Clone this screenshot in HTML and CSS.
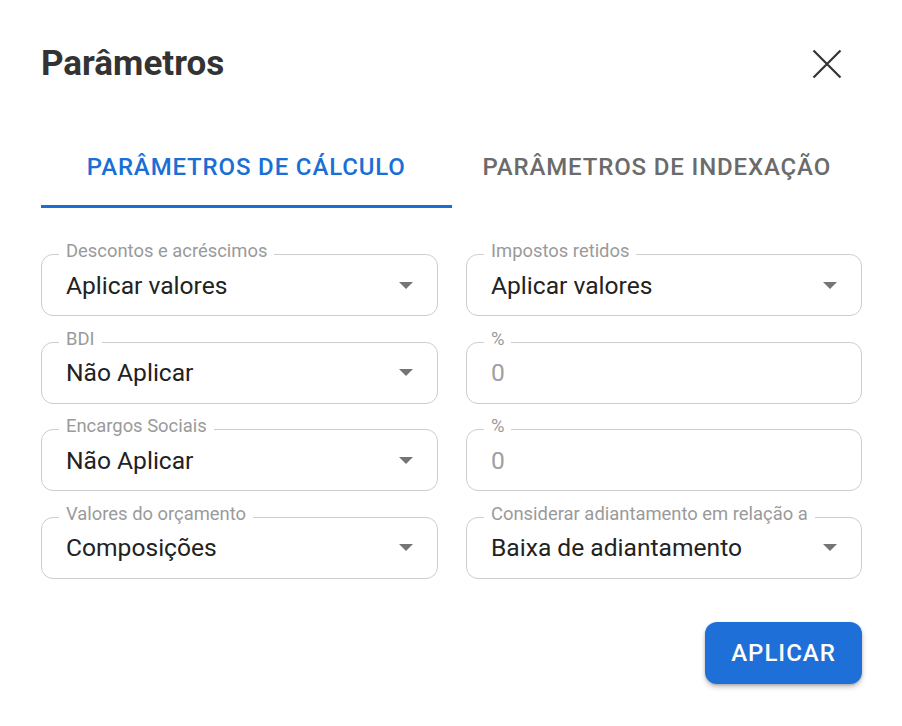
FILE: index.html
```html
<!DOCTYPE html>
<html lang="pt">
<head>
<meta charset="utf-8">
<title>Parâmetros</title>
<link rel="stylesheet" href="styles.css">
</head>
<body>
<div class="dialog">
  <header class="header">
    <h1 class="title">Parâmetros</h1>
    <button class="close" aria-label="Fechar">
      <svg width="30" height="30" viewBox="0 0 30 30"><path d="M1.5 1.5 L28.5 28.5 M28.5 1.5 L1.5 28.5" stroke="#333" stroke-width="2.2" fill="none"/></svg>
    </button>
  </header>
  <nav class="tabs">
    <div class="tab active">PARÂMETROS DE CÁLCULO</div>
    <div class="tab">PARÂMETROS DE INDEXAÇÃO</div>
  </nav>
  <div class="grid">
    <div class="field select"><span class="label">Descontos e acréscimos</span><span class="value">Aplicar valores</span><span class="arrow"></span></div>
    <div class="field select"><span class="label">Impostos retidos</span><span class="value">Aplicar valores</span><span class="arrow"></span></div>
    <div class="field select"><span class="label">BDI</span><span class="value">Não Aplicar</span><span class="arrow"></span></div>
    <div class="field"><span class="label">%</span><span class="value muted">0</span></div>
    <div class="field select"><span class="label">Encargos Sociais</span><span class="value">Não Aplicar</span><span class="arrow"></span></div>
    <div class="field"><span class="label">%</span><span class="value muted">0</span></div>
    <div class="field select"><span class="label">Valores do orçamento</span><span class="value">Composições</span><span class="arrow"></span></div>
    <div class="field select"><span class="label">Considerar adiantamento em relação a</span><span class="value">Baixa de adiantamento</span><span class="arrow"></span></div>
  </div>
  <div class="actions">
    <button class="apply">APLICAR</button>
  </div>
</div>
</body>
</html>
```
FILE: styles.css
```css
* { box-sizing: border-box; }
html, body { margin: 0; background: #fff; }
body { font-family: Roboto, "Noto Sans", Arial, sans-serif; }
.dialog {
  width: 902px;
  height: 726px;
  padding: 44px 40px 0 41px;
  background: #fff;
}
.header {
  display: flex;
  justify-content: space-between;
  align-items: center;
  height: 40px;
}
.title {
  margin: 0;
  font-size: 35px;
  font-weight: 700;
  color: #333;
  line-height: 40px;
}
.close {
  border: 0;
  background: none;
  padding: 0;
  margin-right: 20px;
  width: 30px;
  height: 30px;
  display: flex;
}
.tabs {
  display: grid;
  grid-template-columns: 1fr 1fr;
  margin-top: 44px;
}
.tab {
  height: 80px;
  display: flex;
  align-items: center;
  justify-content: center;
  font-size: 24px;
  font-weight: 500;
  letter-spacing: 0.85px;
  color: #6b6b6b;
  border-bottom: 3px solid transparent;
}
.tab.active {
  color: #1a6fd6;
  border-bottom-color: #1a6fd6;
}
.grid {
  display: grid;
  grid-template-columns: 397px 396px;
  column-gap: 28px;
  row-gap: 25.67px;
  margin-top: 46px;
}
.field {
  position: relative;
  height: 62px;
  border: 1px solid #cdcdcd;
  border-radius: 12px;
  display: flex;
  align-items: center;
  padding: 0 24px;
}
.label {
  position: absolute;
  top: -13px;
  left: 17px;
  padding: 0 7px;
  background: #fff;
  font-size: 18.4px;
  line-height: 18px;
  color: #9a9a9a;
  white-space: nowrap;
}
.value {
  flex: 1;
  font-size: 24.6px;
  color: #222;
}
.value.muted { color: #a0a0a0; }
.arrow {
  width: 0;
  height: 0;
  border-left: 7px solid transparent;
  border-right: 7px solid transparent;
  border-top: 7px solid #757575;
}
.actions {
  display: flex;
  justify-content: flex-end;
  margin-top: 43px;
}
.apply {
  width: 157px;
  height: 62px;
  border: 0;
  border-radius: 12px;
  background: #1f6fd8;
  color: #fff;
  font-family: Roboto, "Noto Sans", Arial, sans-serif;
  font-size: 24px;
  font-weight: 500;
  letter-spacing: 1px;
  box-shadow: 0 3px 5px rgba(0,0,0,0.25), 0 1px 2px rgba(0,0,0,0.15);
}
```
